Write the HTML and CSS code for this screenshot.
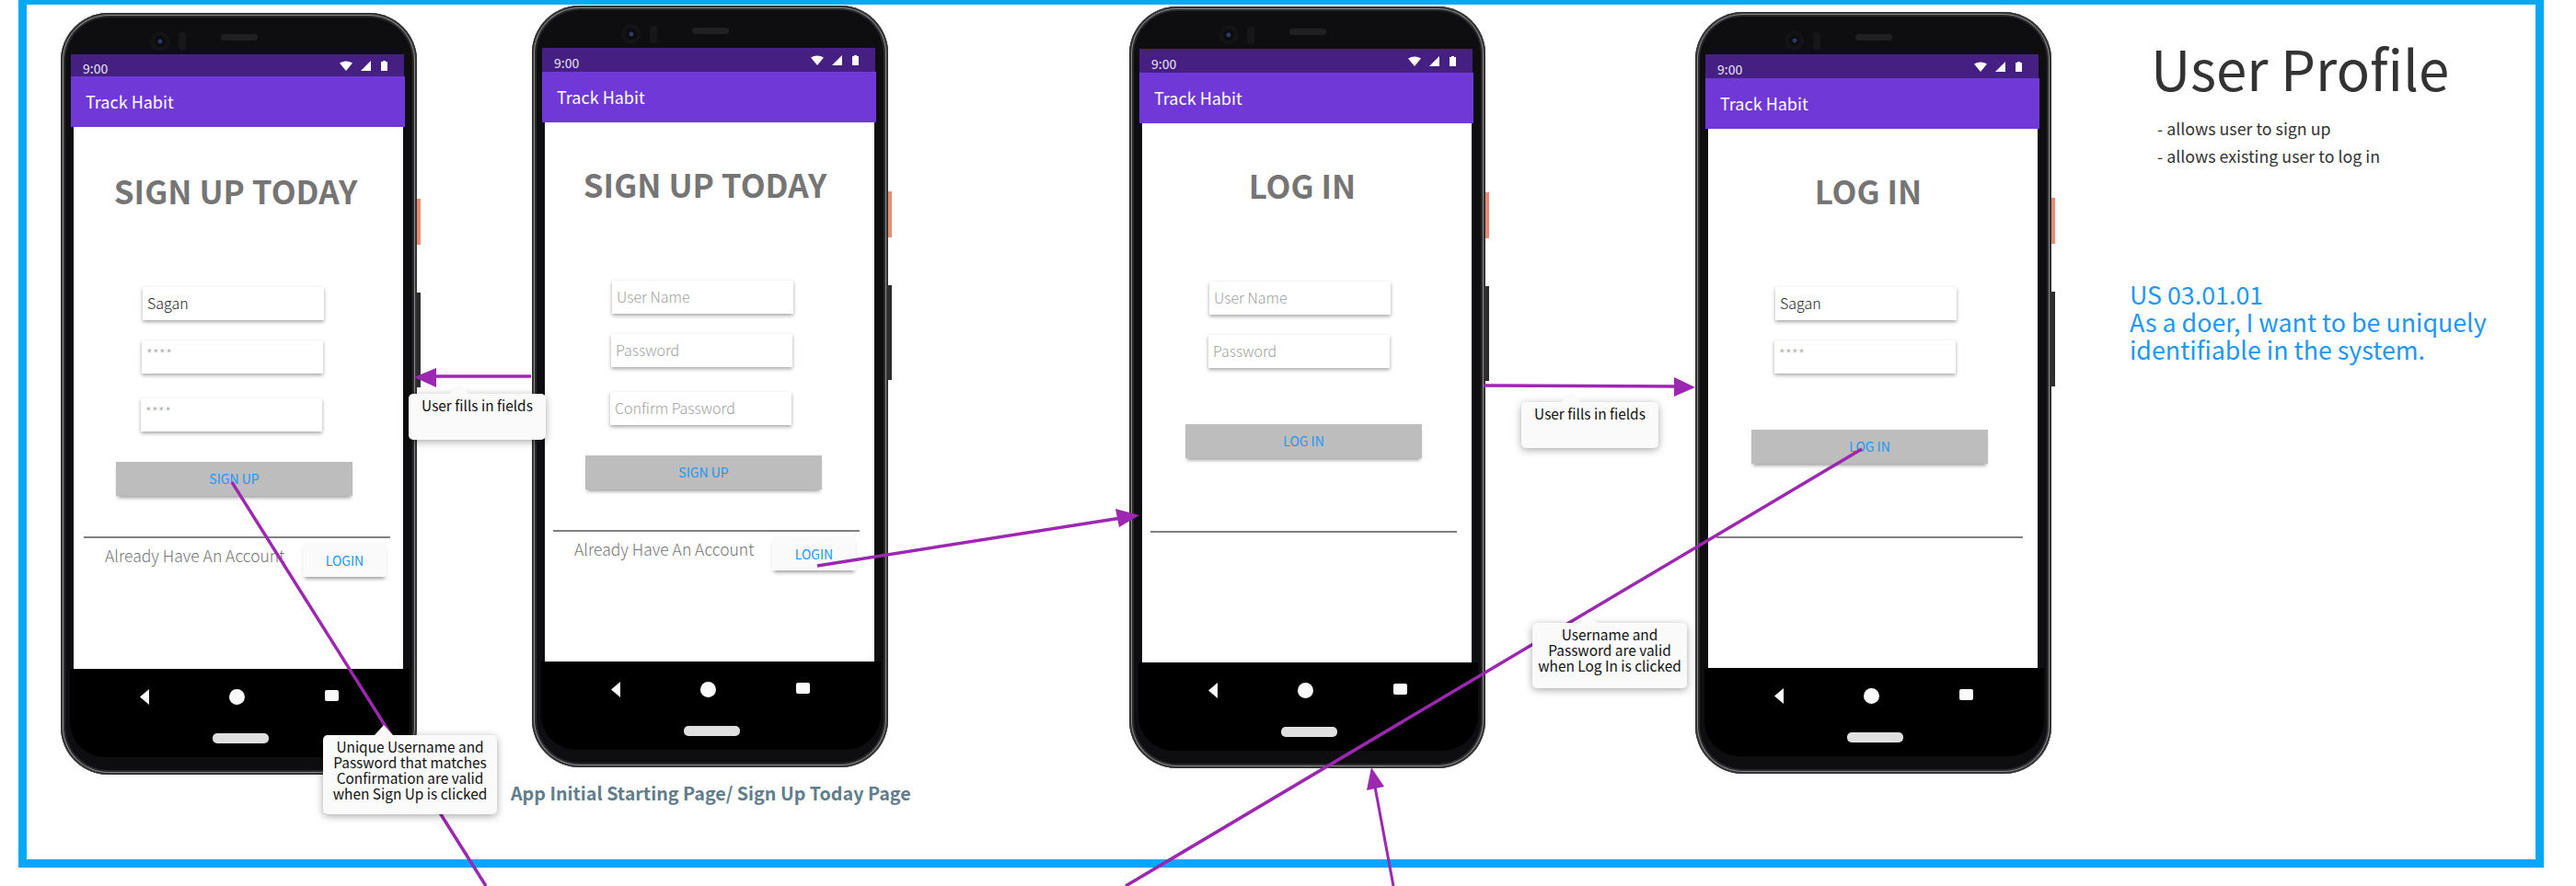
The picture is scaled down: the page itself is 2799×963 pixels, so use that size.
FILE: index.html
```html
<!DOCTYPE html>
<html lang="en">
<head>
  <meta charset="UTF-8">
  <title>User Profile - Track Habit</title>
  <link rel="stylesheet" href="styles.css">
</head>
<body>

<div class="board">
  <div class="frame"></div>

  <!-- Sign up, filled in -->
  <div class="phone phone-1">
    <div class="phone-top"><span class="camera"></span><span class="sensor"></span><span class="speaker"></span></div>
    <div class="status">
      <span class="time">9:00</span>
      <svg class="wifi" viewBox="0 0 14 11"><path d="M0 2.5Q7-1.5 14 2.5L7 11Z"/></svg>
      <svg class="signal" viewBox="0 0 11 11"><path d="M11 0V11H0Z"/></svg>
      <svg class="battery" viewBox="0 0 7 11"><path d="M2 0H5V1H7V11H0V1H2Z"/></svg>
    </div>
    <div class="appbar">Track Habit</div>
    <div class="screen">
      <h2 class="heading">SIGN UP TODAY</h2>
      <div class="field field-name filled">Sagan</div>
      <div class="field field-pass stars">****</div>
      <div class="field field-confirm stars">****</div>
      <div class="btn-wide">SIGN UP</div>
      <div class="divider"></div>
      <div class="account-row"><span class="account-text">Already Have An Account</span><span class="btn-login">LOGIN</span></div>
    </div>
    <div class="nav">
      <div class="nav-keys">
        <svg class="key-back" viewBox="0 0 10 17"><path d="M10 0V17L0 8.5Z"/></svg>
        <span class="key-home"></span>
        <span class="key-recent"></span>
      </div>
      <div class="nav-pill"></div>
    </div>
  </div>

  <!-- Sign up, empty -->
  <div class="phone phone-2">
    <div class="phone-top"><span class="camera"></span><span class="sensor"></span><span class="speaker"></span></div>
    <div class="status">
      <span class="time">9:00</span>
      <svg class="wifi" viewBox="0 0 14 11"><path d="M0 2.5Q7-1.5 14 2.5L7 11Z"/></svg>
      <svg class="signal" viewBox="0 0 11 11"><path d="M11 0V11H0Z"/></svg>
      <svg class="battery" viewBox="0 0 7 11"><path d="M2 0H5V1H7V11H0V1H2Z"/></svg>
    </div>
    <div class="appbar">Track Habit</div>
    <div class="screen">
      <h2 class="heading">SIGN UP TODAY</h2>
      <div class="field field-name">User Name</div>
      <div class="field field-pass">Password</div>
      <div class="field field-confirm">Confirm Password</div>
      <div class="btn-wide">SIGN UP</div>
      <div class="divider"></div>
      <div class="account-row"><span class="account-text">Already Have An Account</span><span class="btn-login">LOGIN</span></div>
    </div>
    <div class="nav">
      <div class="nav-keys">
        <svg class="key-back" viewBox="0 0 10 17"><path d="M10 0V17L0 8.5Z"/></svg>
        <span class="key-home"></span>
        <span class="key-recent"></span>
      </div>
      <div class="nav-pill"></div>
    </div>
  </div>

  <!-- Log in, empty -->
  <div class="phone phone-3">
    <div class="phone-top"><span class="camera"></span><span class="sensor"></span><span class="speaker"></span></div>
    <div class="status">
      <span class="time">9:00</span>
      <svg class="wifi" viewBox="0 0 14 11"><path d="M0 2.5Q7-1.5 14 2.5L7 11Z"/></svg>
      <svg class="signal" viewBox="0 0 11 11"><path d="M11 0V11H0Z"/></svg>
      <svg class="battery" viewBox="0 0 7 11"><path d="M2 0H5V1H7V11H0V1H2Z"/></svg>
    </div>
    <div class="appbar">Track Habit</div>
    <div class="screen login">
      <h2 class="heading">LOG IN</h2>
      <div class="field field-name">User Name</div>
      <div class="field field-pass">Password</div>
      <div class="btn-wide">LOG IN</div>
      <div class="divider"></div>
    </div>
    <div class="nav">
      <div class="nav-keys">
        <svg class="key-back" viewBox="0 0 10 17"><path d="M10 0V17L0 8.5Z"/></svg>
        <span class="key-home"></span>
        <span class="key-recent"></span>
      </div>
      <div class="nav-pill"></div>
    </div>
  </div>

  <!-- Log in, filled in -->
  <div class="phone phone-4">
    <div class="phone-top"><span class="camera"></span><span class="sensor"></span><span class="speaker"></span></div>
    <div class="status">
      <span class="time">9:00</span>
      <svg class="wifi" viewBox="0 0 14 11"><path d="M0 2.5Q7-1.5 14 2.5L7 11Z"/></svg>
      <svg class="signal" viewBox="0 0 11 11"><path d="M11 0V11H0Z"/></svg>
      <svg class="battery" viewBox="0 0 7 11"><path d="M2 0H5V1H7V11H0V1H2Z"/></svg>
    </div>
    <div class="appbar">Track Habit</div>
    <div class="screen login">
      <h2 class="heading">LOG IN</h2>
      <div class="field field-name filled">Sagan</div>
      <div class="field field-pass stars">****</div>
      <div class="btn-wide">LOG IN</div>
      <div class="divider"></div>
    </div>
    <div class="nav">
      <div class="nav-keys">
        <svg class="key-back" viewBox="0 0 10 17"><path d="M10 0V17L0 8.5Z"/></svg>
        <span class="key-home"></span>
        <span class="key-recent"></span>
      </div>
      <div class="nav-pill"></div>
    </div>
  </div>

  <!-- Flow arrows, under the callouts -->
  <svg class="arrows" viewBox="0 0 2799 963">
    <path class="flow" d="M577 409H470"/>
    <path class="head" d="M474 400V421L450 410Z"/>
    <path class="flow" d="M888 615L1218 563"/>
    <path class="head" d="M1212 553L1238 560L1216 573Z"/>
    <path class="flow" d="M1612 419L1822 420"/>
    <path class="head" d="M1819 410V431L1842 421Z"/>
    <path class="flow" d="M252 524L528 963"/>
    <path class="flow" d="M2023 488L1223 963"/>
    <path class="flow thin" d="M1514 963L1494 855"/>
    <path class="head" d="M1485 859L1504 855L1490 834Z"/>
  </svg>

  <div class="tip tip-1">User fills in fields</div>
  <div class="tip tip-2">Unique Username and<br>Password that matches<br>Confirmation are valid<br>when Sign Up is clicked</div>
  <div class="tip tip-3">User fills in fields</div>
  <div class="tip tip-4">Username and<br>Password are valid<br>when Log In is clicked</div>

  <div class="caption">App Initial Starting Page/ Sign Up Today Page</div>

  <div class="notes">
    <h1 class="notes-title">User Profile</h1>
    <p class="notes-item">- allows user to sign up</p>
    <p class="notes-item">- allows existing user to log in</p>
  </div>

  <p class="story">US 03.01.01<br>As a doer, I want to be uniquely<br>identifiable in the system.</p>
</div>

</body>
</html>
```

FILE: styles.css
```css
* {
  box-sizing: border-box;
}

body {
  margin: 0;
  background-color: #fff;
  font-family: "Noto Sans CJK JP", "Noto Sans", sans-serif;
}

.board {
  position: relative;
  width: 2799px;
  height: 963px;
  overflow: hidden;
}

.frame {
  position: absolute;
  left: 20px;
  top: 0;
  width: 2744px;
  height: 943px;
  border: 9px solid #03a9f4;
  border-top-width: 5px;
}

/* Phones sit freely on the board */
.phone {
  position: absolute;
  width: 387px;
  height: 828px;
  display: flex;
  flex-direction: column;
  border-radius: 52px;
  background-color: #0e0e10;
  box-shadow: inset 0 0 0 2px #333, inset 0 0 0 3px #8a8a8a, inset 0 0 0 5px #2a2a2c;
}

.phone::before,
.phone::after {
  content: "";
  position: absolute;
  left: 387px;
  width: 4px;
}

.phone::before {
  top: 202px;
  height: 50px;
  background-color: #ea8a72;
}

.phone::after {
  top: 304px;
  height: 103px;
  background-color: #2c2c2c;
}

.phone-1 { left: 66px; top: 14px; }
.phone-2 { left: 578px; top: 6px; }
.phone-3 { left: 1227px; top: 7px; }
.phone-4 { left: 1842px; top: 13px; }

.phone-top {
  display: flex;
  align-items: center;
  height: 46px;
  padding: 16px 0 0 98px;
  flex-shrink: 0;
}

.camera {
  width: 20px;
  height: 20px;
  border-radius: 50%;
  background: radial-gradient(circle, #2b3a66 0 2px, #0a0a0c 3px, #17171a 10px);
}

.sensor {
  width: 8px;
  height: 19px;
  margin-left: 10px;
  border-radius: 3px;
  background-color: #17171a;
}

.speaker {
  width: 40px;
  height: 7px;
  margin-left: 38px;
  margin-bottom: 8px;
  border-radius: 4px;
  background-color: #202023;
}

.status {
  display: flex;
  align-items: center;
  flex-shrink: 0;
  width: 362px;
  height: 26px;
  margin-left: 11px;
  padding: 0 18px 0 13px;
  background-color: #452082;
}

.time {
  margin-right: auto;
  padding-top: 5px;
  color: #e9e4f2;
  font-size: 14px;
  line-height: 20px;
}

.status svg {
  display: block;
  height: 11px;
  fill: #fff;
}

.wifi { width: 14px; }
.signal { width: 11px; margin-left: 9px; }
.battery { width: 7px; margin-left: 11px; }

.appbar {
  flex-shrink: 0;
  width: 363px;
  height: 55px;
  margin-left: 11px;
  padding-left: 16px;
  background-color: #7038d6;
  color: #fff;
  font-size: 18px;
  line-height: 54px;
}

.screen {
  flex: 1;
  width: 358px;
  margin-left: 14px;
  background-color: #fff;
  color: #757575;
}

.heading {
  width: 348px;
  height: 40px;
  margin: 47px 0 0;
  font-size: 35px;
  font-weight: 700;
  line-height: 40px;
  text-align: center;
}

.field {
  width: 197px;
  height: 36px;
  background-color: #fff;
  box-shadow: 0 2px 4px rgba(0, 0, 0, 0.35);
  padding-left: 5px;
  color: #a0a0a0;
  font-size: 16px;
  font-weight: 300;
  line-height: 34px;
}

.filled {
  color: #212121;
}

.stars {
  font-size: 15px;
  line-height: 30px;
  letter-spacing: 0.4px;
  color: #aaa;
}

.field-name {
  margin: 85px 0 0 73px;
}

.field-pass {
  margin: 22px 0 0 72px;
}

.field-confirm {
  margin: 27px 0 0 71px;
}

.btn-wide {
  width: 257px;
  height: 37px;
  margin: 33px 0 0 44px;
  background-color: #bdbdbd;
  box-shadow: 0 4px 4px -2px rgba(0, 0, 0, 0.4);
  color: #2196f3;
  font-size: 14px;
  line-height: 36px;
  text-align: center;
}

.login .btn-wide {
  margin: 61px 0 0 47px;
}

.divider {
  width: 333px;
  height: 2px;
  margin: 44px 0 0 9px;
  background-color: #808080;
}

.login .divider {
  margin-top: 79px;
}

.account-row {
  display: flex;
  justify-content: space-between;
  align-items: flex-start;
  width: 306px;
  margin: 5px 0 0 32px;
}

.account-text {
  margin-top: 3px;
  font-size: 17.5px;
  font-weight: 300;
  line-height: 22px;
}

.btn-login {
  width: 91px;
  height: 37px;
  background-color: #fafafa;
  box-shadow: 0 4px 4px -2px rgba(0, 0, 0, 0.4);
  color: #2196f3;
  font-size: 14px;
  line-height: 38px;
  text-align: center;
}

/* Phone one was drawn a little off from the others */
.phone-1 .phone-top {
  height: 45px;
}

.phone-1 .status {
  height: 24px;
}

.phone-1 .screen {
  padding: 2px 0 0 2px;
}

.nav {
  flex-shrink: 0;
  width: 369px;
  height: 96px;
  margin: 0 0 19px 10px;
  border-radius: 0 0 38px 38px;
  background-color: #000;
}

.nav-keys {
  display: flex;
  align-items: center;
  gap: 87px;
  height: 17px;
  margin-top: 22px;
  padding-left: 76px;
}

.key-back {
  width: 10px;
  height: 17px;
  fill: #fafafa;
}

.key-home {
  width: 17px;
  height: 17px;
  border-radius: 50%;
  background-color: #fafafa;
}

.key-recent {
  width: 15px;
  height: 12px;
  margin-bottom: 3px;
  border-radius: 2px;
  background-color: #fafafa;
}

.nav-pill {
  width: 61px;
  height: 11px;
  margin: 31px 0 0 155px;
  border-radius: 5px;
  background-color: #e0e0e0;
}

.arrows {
  position: absolute;
  left: 0;
  top: 0;
  width: 2799px;
  height: 963px;
}

.flow {
  fill: none;
  stroke: #9c27b0;
  stroke-width: 3.5;
}

.thin {
  stroke-width: 3;
}

.head {
  fill: #9c27b0;
}

/* Callouts */
.tip {
  position: absolute;
  padding-top: 4px;
  border-radius: 5px;
  background-color: #fafafa;
  box-shadow: 0 2px 8px rgba(0, 0, 0, 0.35);
  color: #111;
  font-size: 15.4px;
  line-height: 17px;
  text-align: center;
}

.tip::before {
  content: "";
  position: absolute;
  top: -11px;
  border-left: 10px solid transparent;
  border-right: 10px solid transparent;
  border-bottom: 11px solid #fafafa;
}

.tip-1 { left: 444px; top: 428px; width: 149px; height: 50px; }
.tip-1::before { left: 45px; }
.tip-2 { left: 351px; top: 799px; width: 189px; height: 86px; }
.tip-2::before { left: 56px; }
.tip-3 { left: 1653px; top: 437px; width: 149px; height: 50px; }
.tip-3::before { left: 44px; }
.tip-4 { left: 1665px; top: 677px; width: 168px; height: 71px; }
.tip-4::before { left: 51px; }

.caption {
  position: absolute;
  left: 555px;
  top: 848px;
  color: #607d8b;
  font-size: 19.7px;
  font-weight: 700;
  line-height: 28px;
}

.notes {
  position: absolute;
  left: 2337px;
  top: 28px;
  color: #333;
}

.notes-title {
  margin: 0 0 6px;
  font-size: 60px;
  font-weight: 400;
  line-height: 90px;
}

.notes-item {
  margin: 0 0 0 7px;
  font-size: 17.8px;
  line-height: 30px;
}

.story {
  position: absolute;
  left: 2314px;
  top: 305px;
  margin: 0;
  color: #2196f3;
  font-size: 26.8px;
  line-height: 30px;
}
```
